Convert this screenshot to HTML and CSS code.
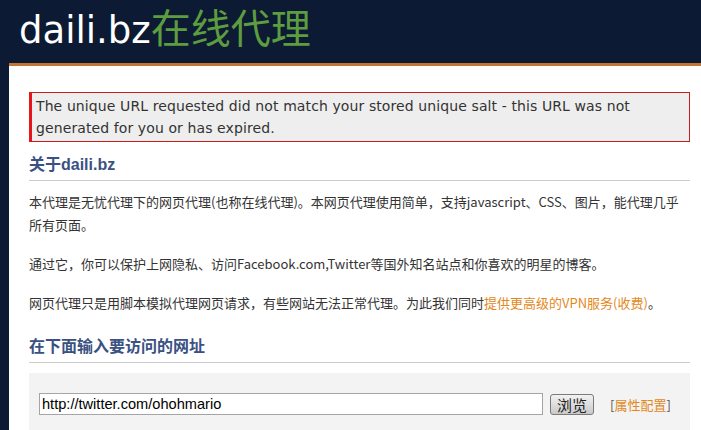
FILE: index.html
```html
<!DOCTYPE html>
<html>
<head>
  <meta charset="utf-8">
  <link rel="stylesheet" href="styles.css">
</head>
<body>
  <div class="header">
    <span class="logo">daili.bz<span class="logo-cn">在线代理</span></span>
  </div>

  <div class="page">
    <div class="error">
      The unique URL requested did not match your stored unique salt - this URL was not
      generated for you or has expired.
    </div>

    <h2 class="title">关于daili.bz</h2>
    <div class="about">
      <p>本代理是无忧代理下的网页代理(也称在线代理)。本网页代理使用简单，支持javascript、CSS、图片，能代理几乎所有页面。</p>
      <p>通过它，你可以保护上网隐私、访问Facebook.com,Twitter等国外知名站点和你喜欢的明星的博客。</p>
      <p>网页代理只是用脚本模拟代理网页请求，有些网站无法正常代理。为此我们同时<a href="#">提供更高级的VPN服务(收费)</a>。</p>
    </div>

    <h2 class="title">在下面输入要访问的网址</h2>
    <form class="url-form">
      <input class="url-input" type="text" value="http://twitter.com/ohohmario">
      <button class="go" type="button">浏览</button>
      <span class="options">[<a href="#">属性配置</a>]</span>
    </form>
  </div>
</body>
</html>
```

FILE: styles.css
```css
body {
  margin: 0;
  background: #0c1a34;
  font-family: "Noto Sans CJK SC", sans-serif;
  color: #333;
}

.header {
  height: 63px;
  padding-left: 19px;
  display: flex;
  align-items: center;
}

.logo {
  font-family: "DejaVu Sans", "Noto Sans CJK SC", sans-serif;
  font-size: 37px;
  color: #fff;
  line-height: 50px;
  margin-top: -6px;
}

.logo-cn {
  font-family: "Noto Sans CJK SC", sans-serif;
  color: #5d9c3f;
  font-size: 40px;
}

.page {
  margin-left: 9px;
  background: #fff;
  border-top: 3px solid #c47532;
  padding: 26px 11px 0 20px;
  height: 400px;
}

.error {
  background: #eee;
  border: 1px solid #c81e1e;
  border-left: 3px solid #e8141b;
  padding: 2px 6px 2px 4px;
  font-family: "DejaVu Sans", sans-serif;
  font-size: 14px;
  letter-spacing: 0.1px;
  line-height: 22px;
  color: #333;
}

.title {
  margin: 11px 0 0;
  padding-bottom: 3px;
  border-bottom: 1px solid #ccc;
  font-family: "Liberation Sans", "Noto Sans CJK SC", sans-serif;
  font-size: 16px;
  line-height: 24px;
  color: #3a5182;
}

.about {
  padding: 9px 0 10px;
}

.about p {
  margin: 0 0 16px;
  font-size: 13px;
  line-height: 23px;
}

.about p:last-child {
  margin-bottom: 0;
}

a {
  color: #e2891c;
  text-decoration: none;
}

.url-form {
  margin-top: 10px;
  background: #f3f3f3;
  padding: 20px 10px 20px;
  display: flex;
  align-items: center;
}

.url-input {
  width: 498px;
  height: 18px;
  border: 1px solid #a5a5a5;
  padding: 1px 2px;
  font-family: "Liberation Sans", sans-serif;
  font-size: 14.6px;
  color: #000;
}

.go {
  margin-left: 7px;
  width: 44px;
  height: 21px;
  padding: 0;
  border: 1px solid #7a7a7a;
  border-radius: 3px;
  background: linear-gradient(#f2f2f2, #c9c9c9);
  font-family: "Noto Sans CJK SC", sans-serif;
  font-size: 15px;
  line-height: 19px;
  color: #222;
}

.options {
  margin-left: 16px;
  font-size: 13px;
  color: #555;
}
```
